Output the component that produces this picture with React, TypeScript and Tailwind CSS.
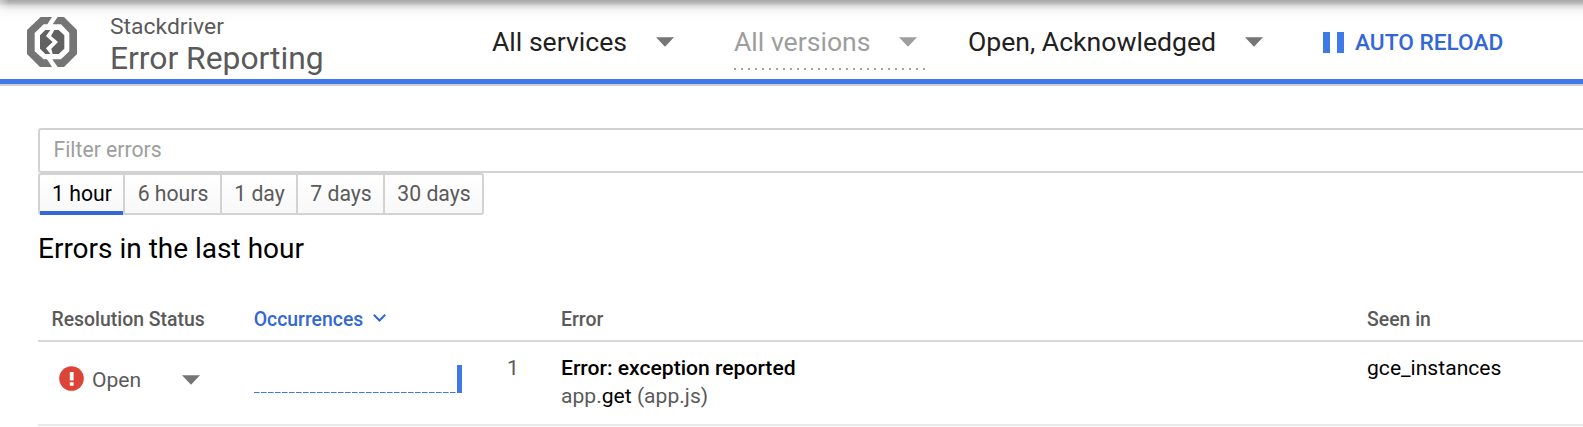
type CaretProps = { className?: string };

function Caret({ className = "text-[#757575]" }: CaretProps) {
  return (
    <svg viewBox="0 0 18 10" className={`block h-[10px] w-[18px] shrink-0 ${className}`} fill="currentColor">
      <path d="M0 0.3H18L9 9.7Z" />
    </svg>
  );
}

function Logo() {
  return (
    <svg viewBox="0 0 150 150" className="mt-[17px] block size-[50px] shrink-0">
      <g fill="#757575">
        <path d="M41 0H75L61 22H50L23 48V103L50 127H60L75 150H39L0 111V39Z" />
        <path d="M92 0H111L150 39V111L111 150H92L76 127H102L127 103V48L102 22H77Z" />
      </g>
      <g fill="#616161">
        <path d="M55 39H70L57 57L77 75L57 94L70 111H55L39 95V55Z" />
        <path d="M82 39H95L112 55V95L95 111H77L73 95L93 75L72 57Z" />
      </g>
    </svg>
  );
}

const ranges = [
  { label: "1 hour", width: "w-[85px]" },
  { label: "6 hours", width: "w-[97px]" },
  { label: "1 day", width: "w-[76px]" },
  { label: "7 days", width: "w-[87px]" },
  { label: "30 days", width: "w-[97px]" },
];

function Header() {
  return (
    <header className="flex h-[86px] items-start border-b-2 border-[#cfcfcf] bg-[linear-gradient(to_right,rgba(255,255,255,0.4)_0px,transparent_9px),linear-gradient(to_bottom,#a6a6a6_0px,#bababa_3px,#dedede_6px,#f4f4f4_10px,#fcfcfc_15px,#fff_24px)]">
      <div className="flex h-[84px] w-full items-start border-b-[5px] border-[#3f78e7] pl-[27px]">
        <Logo />
        <div className="ml-[33px] w-[382px] shrink-0 pt-[14px] text-[#5a5a5a]">
          <div className="text-[22.9px] leading-[26px]">Stackdriver</div>
          <div className="text-[31.8px] leading-[36px]">Error Reporting</div>
        </div>
        <div className="flex h-[57px] w-[242px] shrink-0 items-start pt-[27px] text-[26.6px] leading-[30px] text-[#212121]">
          <span className="w-[163.5px]">All services</span>
          <Caret className="mt-[10px] text-[#757575]" />
        </div>
        <div className="w-[191px] shrink-0 pt-[27px] text-[26.6px] leading-[30px] text-[#9e9e9e]">
          <div className="flex items-start">
            <span className="w-[164.5px]">All versions</span>
            <Caret className="mt-[10px] text-[#9e9e9e]" />
          </div>
          <div className="mt-[11px] h-[2px] bg-[repeating-linear-gradient(to_right,#a3a3a3_0px,#a3a3a3_2px,transparent_2px,transparent_7px)]" />
        </div>
        <div className="ml-[43px] flex w-[355px] shrink-0 items-start pt-[27px] text-[26.6px] leading-[30px] text-[#212121]">
          <span className="w-[277px]">Open, Acknowledged</span>
          <Caret className="mt-[10px] text-[#757575]" />
        </div>
        <button className="flex items-start text-[22.7px] font-medium leading-[30px] text-[#3367d6]">
          <span className="mt-[32px] flex h-[21px] w-[32px] gap-[7px]">
            <span className="w-[7px] bg-[#3f78e7]" />
            <span className="w-[7px] bg-[#3f78e7]" />
          </span>
          <span className="mt-[28px] whitespace-nowrap">AUTO RELOAD</span>
        </button>
      </div>
    </header>
  );
}

function Filters() {
  return (
    <div className="pl-[38px] pt-[42px]">
      <div className="h-[45px] rounded-l-[3px] border-2 border-r-0 border-[#d2d2d2] pl-[13.5px] pt-[7px] text-[21.2px] leading-[26px] text-[#9e9e9e]">
        Filter errors
      </div>
      <div className="flex h-[42px] w-[446px] rounded-[3px] border-2 border-[#d2d2d2] bg-linear-to-b from-white to-[#f8f8f8] text-[21.2px] leading-[26px] text-[#5a5a5a]">
        {ranges.map((r, i) => (
          <div
            key={r.label}
            className={`${r.width} flex shrink-0 ${i < 4 ? "border-r-2 border-r-[#d2d2d2]" : ""}`}
          >
            <span
              className={`flex-1 whitespace-nowrap pl-px pt-[6px] text-center ${
                i === 0 ? "-mb-[2px] border-b-4 border-b-[#3367d6] text-black" : ""
              }`}
            >
              {r.label}
            </span>
          </div>
        ))}
      </div>
    </div>
  );
}

function Sparkline() {
  return (
    <svg viewBox="0 0 208 28" className="block h-[28px] w-[208px]">
      <line x1="0" y1="27.5" x2="202" y2="27.5" stroke="#3f78e7" strokeWidth="1" strokeDasharray="5.6 1.4" />
      <rect x="203" y="0" width="5" height="28" fill="#3f78e7" />
    </svg>
  );
}

const columns = "grid grid-cols-[202px_254px_54px_806px_1fr]";

export default function App() {
  return (
    <div className="h-[427px] w-full overflow-hidden bg-white font-['Roboto',sans-serif]">
      <Header />
      <Filters />
      <h1 className="ml-[38px] mt-[18px] h-[32px] text-[28px] leading-[32px] text-black">Errors in the last hour</h1>
      <div className="ml-[38px]">
        <div className={`${columns} mt-[41px] h-[36px] border-b-2 border-[#d8d8d8] pl-[13px] pt-[3px] text-[19.4px] font-medium leading-[22px] text-[#5a5a5a]`}>
          <span className="pl-[0.5px]">Resolution Status</span>
          <span className="flex items-start pl-[0.7px] text-[#3367d6]">
            Occurrences
            <svg viewBox="0 0 13 8" className="ml-[9.5px] mt-[5px] block h-[8px] w-[13px]" fill="none" stroke="currentColor" strokeWidth="2">
              <path d="M0.8 0.8L6.5 6.5L12.2 0.8" />
            </svg>
          </span>
          <span />
          <span>Error</span>
          <span>Seen in</span>
        </div>
        <div className={`${columns} h-[84px] border-b-2 border-[#e9e9e9] pl-[13px] text-[21.1px] leading-[28px]`}>
          <div className="flex items-start pl-[8px] pt-[24px] text-[#5a5a5a]">
            <svg viewBox="0 0 25 25" className="block size-[25px] shrink-0">
              <circle cx="12.5" cy="12.5" r="12.3" fill="#db4437" />
              <path d="M10.8 6H14.6V14.6H10.8ZM10.8 16.2H14.6V19.8H10.8Z" fill="#fff" />
            </svg>
            <span className="ml-[8px] w-[89.5px]">Open</span>
            <Caret className="mt-[9px] text-[#757575]" />
          </div>
          <div className="pl-[1px] pt-[23px]">
            <Sparkline />
          </div>
          <div className="pt-[12px] text-[#5a5a5a]">1</div>
          <div className="pt-[12px]">
            <div className="font-medium text-black">Error: exception reported</div>
            <div className="text-[#5a5a5a]">
              app.<span className="text-black">get</span> (app.js)
            </div>
          </div>
          <div className="pt-[12px] text-black">gce_instances</div>
        </div>
      </div>
    </div>
  );
}
